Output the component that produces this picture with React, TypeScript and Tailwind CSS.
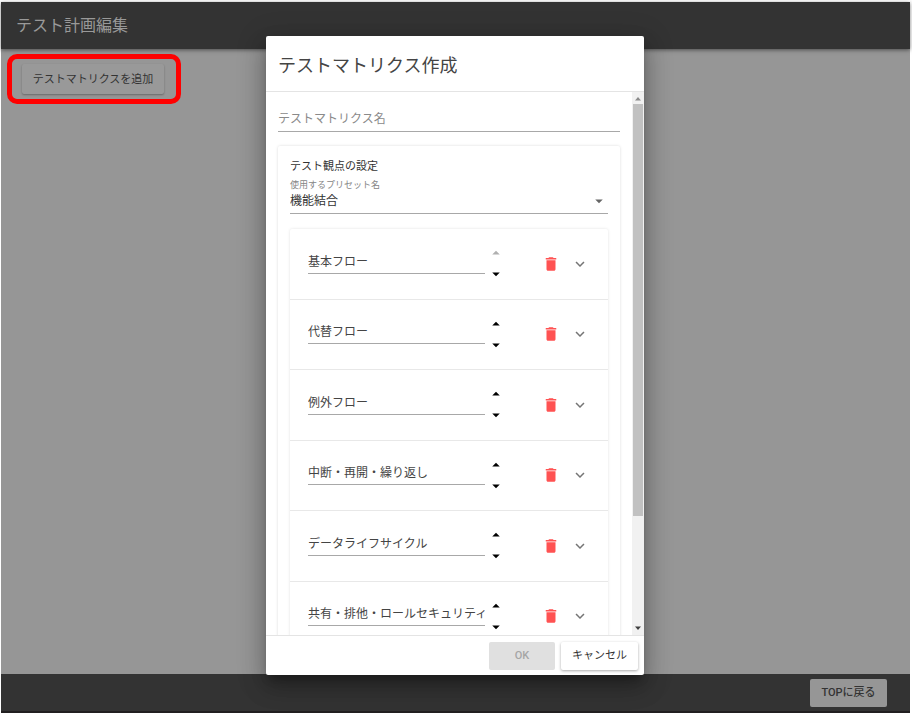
import { MdArrowDropDown, MdArrowDropUp, MdDelete, MdExpandMore } from 'react-icons/md';

const viewpoints = [
  '基本フロー',
  '代替フロー',
  '例外フロー',
  '中断・再開・繰り返し',
  'データライフサイクル',
  '共有・排他・ロールセキュリティ',
];

function ViewpointRow({ name, first }: { name: string; first: boolean }) {
  return (
    <li className="flex items-center border-b border-[#e8e8e8] pl-[18px]">
      <input
        aria-label="テスト観点"
        defaultValue={name}
        className="mb-1.5 h-[26px] w-[177px] rounded-none border-b border-[#a8a8a8] bg-transparent text-xs text-[#444] outline-none"
      />
      <div className="ml-0.5 flex flex-col gap-[3px] text-lg text-black">
        <button type="button" aria-label="上へ移動" disabled={first} className="disabled:text-[#b0b0b0]">
          <MdArrowDropUp />
        </button>
        <button type="button" aria-label="下へ移動">
          <MdArrowDropDown />
        </button>
      </div>
      <button type="button" aria-label="削除" className="ml-[37px] text-lg text-[#ff5252]">
        <MdDelete />
      </button>
      <button type="button" aria-label="詳細を開く" className="ml-[11px] text-lg text-[#757575]">
        <MdExpandMore />
      </button>
    </li>
  );
}

function Scrollbar() {
  return (
    <div aria-hidden="true" className="flex w-3 shrink-0 flex-col items-center bg-[#f1f1f1]">
      <svg viewBox="0 0 12 12" className="h-3 w-3 shrink-0">
        <path d="M3 8.5 L6 5 L9 8.5Z" fill="#8a8a8a" />
      </svg>
      <div className="w-2.5 flex-[412] bg-[#c1c1c1]" />
      <div className="flex-[107]" />
      <svg viewBox="0 0 12 12" className="h-3 w-3 shrink-0">
        <path d="M3 3.5 L6 7 L9 3.5Z" fill="#404040" />
      </svg>
    </div>
  );
}

function MatrixDialog() {
  return (
    <div
      role="dialog"
      aria-modal="true"
      aria-labelledby="dialog-title"
      className="flex w-[378px] flex-col rounded-xs bg-white shadow-[0_7px_9px_-4px_rgba(0,0,0,0.3),0_12px_22px_2px_rgba(0,0,0,0.2),0_5px_28px_4px_rgba(0,0,0,0.15)]"
    >
      <h2 id="dialog-title" className="flex h-14 shrink-0 items-center border-b border-[#e4e4e4] px-3 pt-1 text-lg text-[#444]">
        テストマトリクス作成
      </h2>
      <div className="flex min-h-0 flex-1">
        <div className="flex-1 overflow-y-auto px-3 pt-3.5 [scrollbar-width:none]">
          <input
            aria-label="テストマトリクス名"
            placeholder="テストマトリクス名"
            className="block h-[26px] w-full rounded-none border-b border-[#a8a8a8] bg-transparent text-xs outline-none placeholder:text-[#8a8a8a]"
          />
          <section className="mt-3.5 rounded-xs px-3 pt-[13px] shadow-[0_0_3px_rgba(0,0,0,0.15)]">
            <h3 className="text-[11px] leading-4 text-[#333]">テスト観点の設定</h3>
            <label htmlFor="preset" className="mt-1 block text-[9px] leading-3 text-[#858585]">
              使用するプリセット名
            </label>
            <div className="relative">
              <select
                id="preset"
                className="block h-[23px] w-full appearance-none rounded-none border-b border-[#a8a8a8] bg-transparent pb-0.5 text-xs text-[#333] outline-none"
              >
                <option>機能結合</option>
              </select>
              <MdArrowDropDown className="pointer-events-none absolute right-0 top-px text-lg text-[#666]" />
            </div>
            <ul className="mt-[15px] grid h-[423px] auto-rows-fr rounded-xs shadow-[0_0_3px_rgba(0,0,0,0.12)]">
              {viewpoints.map((name, i) => (
                <ViewpointRow key={name} name={name} first={i === 0} />
              ))}
            </ul>
          </section>
        </div>
        <Scrollbar />
      </div>
      <div className="flex h-10 shrink-0 items-center justify-end gap-1.5 border-t border-[#e4e4e4] pr-1.5">
        <button type="button" disabled className="h-7 w-[66px] rounded-xs bg-[#e0e0e0] pt-0.5 font-medium text-[#a6a6a6]">
          OK
        </button>
        <button type="button" className="h-7 w-[77px] rounded-xs bg-white pt-0.5 text-[#333] shadow-[0_1px_3px_rgba(0,0,0,0.35)]">
          キャンセル
        </button>
      </div>
    </div>
  );
}

export default function App() {
  return (
    <div className="h-screen bg-white pb-[3px] pl-px pr-0.5 pt-0.5 font-['Roboto','Noto_Sans_CJK_JP',sans-serif] text-[11px]">
      <div className="relative flex h-full flex-col bg-[#969696]">
        <header className="z-0 flex h-[47px] shrink-0 items-center bg-[#333] px-[15px] shadow-[0_1px_4px_rgba(0,0,0,0.5)]">
          <h1 className="text-base text-[#999]">テスト計画編集</h1>
        </header>
        <main className="flex-1">
          <div className="ml-1.5 mt-[5px] w-fit rounded-[10px] border-5 border-[#f00] py-[5px] pl-2.5 pr-3">
            <button type="button" className="h-[30px] w-[142px] rounded-xs bg-[#999] pt-0.5 text-[#333] shadow-[0_1px_2px_rgba(0,0,0,0.3)]">
              テストマトリクスを追加
            </button>
          </div>
        </main>
        <footer className="flex h-[39px] shrink-0 items-center justify-end border-b-2 border-[#211f20] bg-[#333] pr-[23px]">
          <button type="button" className="h-7 w-[77px] rounded-xs bg-[#969696] pt-0.5 font-medium text-[#333]">
            TOPに戻る
          </button>
        </footer>
        <div className="absolute inset-0 flex justify-center pb-[38px] pr-px pt-[34px]">
          <MatrixDialog />
        </div>
      </div>
    </div>
  );
}
